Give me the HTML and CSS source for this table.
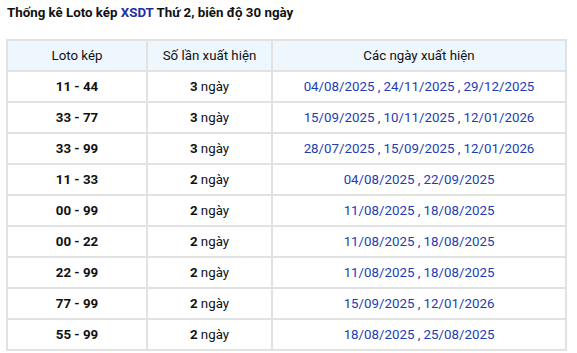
FILE: index.html
```html
<!DOCTYPE html>
<html lang="vi">
<head>
    <meta charset="UTF-8">
    <meta name="viewport" content="width=device-width, initial-scale=1.0">
    <title>Thống kê Loto kép XSDT</title>
    <link rel="stylesheet" href="styles.css">
</head>
<body>
    <h2 class="title">Thống kê Loto kép <span class="lottery">XSDT</span> Thứ 2, biên độ 30 ngày</h2>
    <table class="stats">
        <thead>
            <tr>
                <th class="col-pair">Loto kép</th>
                <th class="col-count">Số lần xuất hiện</th>
                <th>Các ngày xuất hiện</th>
            </tr>
        </thead>
        <tbody>
            <tr><td class="pair">11 - 44</td><td><b>3</b> ngày</td><td class="dates">04/08/2025 , 24/11/2025 , 29/12/2025</td></tr>
            <tr><td class="pair">33 - 77</td><td><b>3</b> ngày</td><td class="dates">15/09/2025 , 10/11/2025 , 12/01/2026</td></tr>
            <tr><td class="pair">33 - 99</td><td><b>3</b> ngày</td><td class="dates">28/07/2025 , 15/09/2025 , 12/01/2026</td></tr>
            <tr><td class="pair">11 - 33</td><td><b>2</b> ngày</td><td class="dates">04/08/2025 , 22/09/2025</td></tr>
            <tr><td class="pair">00 - 99</td><td><b>2</b> ngày</td><td class="dates">11/08/2025 , 18/08/2025</td></tr>
            <tr><td class="pair">00 - 22</td><td><b>2</b> ngày</td><td class="dates">11/08/2025 , 18/08/2025</td></tr>
            <tr><td class="pair">22 - 99</td><td><b>2</b> ngày</td><td class="dates">11/08/2025 , 18/08/2025</td></tr>
            <tr><td class="pair">77 - 99</td><td><b>2</b> ngày</td><td class="dates">15/09/2025 , 12/01/2026</td></tr>
            <tr><td class="pair">55 - 99</td><td><b>2</b> ngày</td><td class="dates">18/08/2025 , 25/08/2025</td></tr>
        </tbody>
    </table>
</body>
</html>
```

FILE: styles.css
```css
body {
    font-family: Roboto, Arial, sans-serif;
    font-size: 13.3px;
    color: #111;
    margin: 0;
    padding: 0 10px 0 6px;
    background-color: #fff;
}
.title {
    font-size: 13.3px;
    font-weight: bold;
    margin: 0;
    padding: 5px 0 0 1px;
    height: 39px;
    box-sizing: border-box;
    line-height: 16px;
}
.lottery {
    color: #1a2fa8;
}
.stats {
    width: 561px;
    border-collapse: collapse;
    table-layout: fixed;
}
.stats th,
.stats td {
    border: 2px solid #e2e2e2;
    text-align: center;
    height: 29px;
    padding: 0;
    line-height: 16px;
}
.stats th {
    font-weight: normal;
    background-color: #eef6fe;
}
.col-pair {
    width: 138px;
}
.col-count {
    width: 123px;
}
.pair {
    font-weight: bold;
}
.dates {
    color: #1c3db3;
}
```
